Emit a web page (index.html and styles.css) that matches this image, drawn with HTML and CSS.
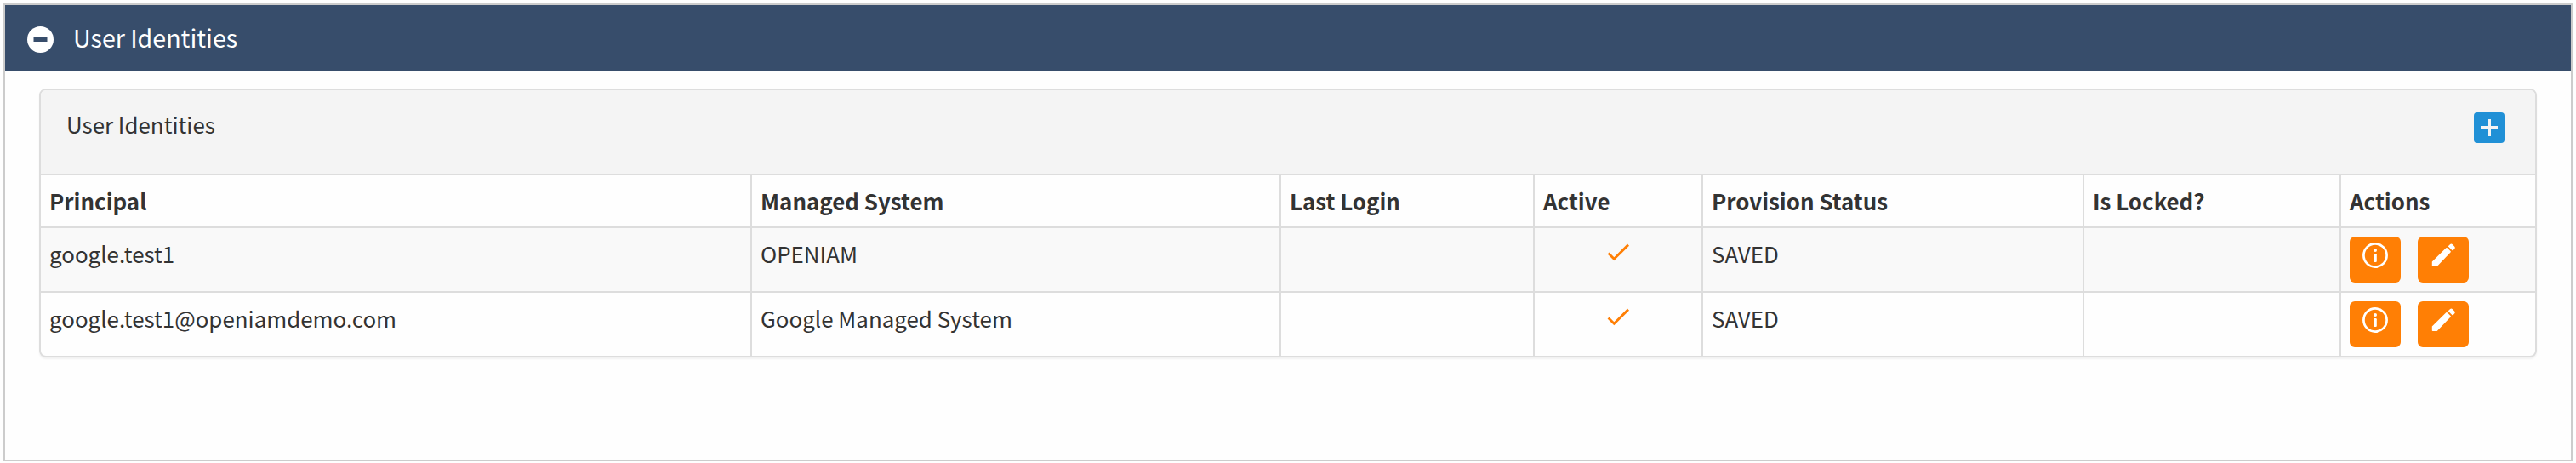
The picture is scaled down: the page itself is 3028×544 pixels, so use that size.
FILE: index.html
```
<!DOCTYPE html>
<html lang="en">
<head>
<meta charset="utf-8">
<title>User Identities</title>
<link rel="stylesheet" href="styles.css">
</head>
<body>
<svg class="sprite" aria-hidden="true">
  <symbol id="check" viewBox="0 0 28 28"><path d="M2.600 13.500L9.300 20.200L26 3.600" fill="none" stroke="#ff7f05" stroke-width="2.900"/></symbol>
  <symbol id="info" viewBox="0 0 30 30"><circle cx="15" cy="15" r="13.6" fill="none" stroke="#fff" stroke-width="2.7"/><circle cx="15" cy="9" r="2" fill="#fff"/><rect x="13.2" y="13" width="3.6" height="10" rx="1.2" fill="#fff"/></symbol>
  <symbol id="pencil" viewBox="0 0 28 28"><path d="M0.8 21.4L17.3 5.3a1 1 0 0 1 1.4 0l3.8 3.8a1 1 0 0 1 0 1.400L6.700 27H1.600a.8.8 0 0 1-.8-.8zM20.300 2.700l1.600-1.500a2.200 2.200 0 0 1 3 0l2.200 2.200a2.200 2.200 0 0 1 0 3l-1.400 1.600a1 1 0 0 1-1.400 0L20.300 4.100a1 1 0 0 1 0-1.400z" fill="#fff"/></symbol>
</svg>
<section class="panel">
  <header class="panel-header">
    <svg class="collapse" viewBox="0 0 31 31"><circle cx="15.500" cy="15.500" r="15.500" fill="#fff"/><rect x="7.500" y="13" width="16" height="5" fill="#374d6b"/></svg>
    <h1 class="panel-title">User Identities</h1>
  </header>
  <div class="card">
    <div class="card-header">
      <h2 class="card-title">User Identities</h2>
      <button class="add" aria-label="Add"><svg viewBox="0 0 20 20"><path d="M8 0h4v8h8v4h-8v8H8v-8H0V8h8z" fill="#f4f4f4"/></svg></button>
    </div>
    <div class="grid">
      <div class="row head">
        <div class="cell">Principal</div><div class="cell">Managed System</div><div class="cell">Last Login</div><div class="cell">Active</div><div class="cell">Provision Status</div><div class="cell">Is Locked?</div><div class="cell">Actions</div>
      </div>
      <div class="row striped">
        <div class="cell">google.test1</div><div class="cell">OPENIAM</div><div class="cell"></div>
        <div class="cell active"><svg class="check"><use href="#check"/></svg></div>
        <div class="cell">SAVED</div><div class="cell"></div>
        <div class="cell actions"><button class="btn" aria-label="Info"><svg class="info"><use href="#info"/></svg></button><button class="btn" aria-label="Edit"><svg class="pencil"><use href="#pencil"/></svg></button></div>
      </div>
      <div class="row">
        <div class="cell">google.test1@openiamdemo.com</div><div class="cell">Google Managed System</div><div class="cell"></div>
        <div class="cell active"><svg class="check"><use href="#check"/></svg></div>
        <div class="cell">SAVED</div><div class="cell"></div>
        <div class="cell actions"><button class="btn" aria-label="Info"><svg class="info"><use href="#info"/></svg></button><button class="btn" aria-label="Edit"><svg class="pencil"><use href="#pencil"/></svg></button></div>
      </div>
    </div>
  </div>
</section>
</body>
</html>
```
FILE: styles.css
```
* { box-sizing: border-box; }
body { margin: 0; padding: 4px; height: 544px; background: #fefefe; color: #333; font: 25.9px/40px "Noto Sans CJK SC", sans-serif; }
h1, h2 { margin: 0; font-weight: 400; }
button { border: 0; padding: 0; display: flex; }
.sprite { display: none; }
.panel { height: 538px; border: 2px solid #ccc; background: #fefefe; }
.panel-header { height: 78px; background: #374d6b; display: flex; align-items: center; gap: 23px; padding-left: 26px; }
.collapse { width: 31px; height: 31px; display: block; margin-top: 2px; }
.panel-title { color: #fff; font-size: 28.6px; margin-top: -2px; }
.card { margin: 20px 40px 0; height: 316px; border: 2px solid #ddd; border-radius: 8px; box-shadow: 0 2px 2px rgba(0,0,0,.05); overflow: hidden; }
.card-header { height: 100px; background: #f4f4f4; border-bottom: 2px solid #ddd; display: flex; justify-content: space-between; padding: 20px 36px 0 30px; }
.card-title { font-size: 25.9px; }
.add { width: 36px; height: 36px; margin-top: 6px; border-radius: 4px; background: #2090d6; align-items: center; justify-content: center; }
.add svg { width: 20px; height: 20px; }
.row { display: grid; grid-template-columns: 836px 622px 298px 198px 448px 302px 1fr; height: 76px; border-bottom: 2px solid #ddd; }
.row:last-child { border-bottom: 0; height: 74px; }
.head { height: 62px; font-weight: 700; }
.striped { background: #f9f9f9; }
.cell { border-right: 2px solid #ddd; padding: 10px 10px 0; white-space: nowrap; }
.cell:last-child { border-right: 0; }
.active { display: flex; justify-content: center; padding-top: 16px; }
.check { width: 28px; height: 28px; }
.actions { display: flex; gap: 20px; }
.btn { width: 60px; height: 54px; border-radius: 6px; background: #ff7f05; justify-content: center; padding-top: 7px; }
.info { width: 30px; height: 30px; }
.pencil { width: 28px; height: 28px; margin-top: 1px; }
```
